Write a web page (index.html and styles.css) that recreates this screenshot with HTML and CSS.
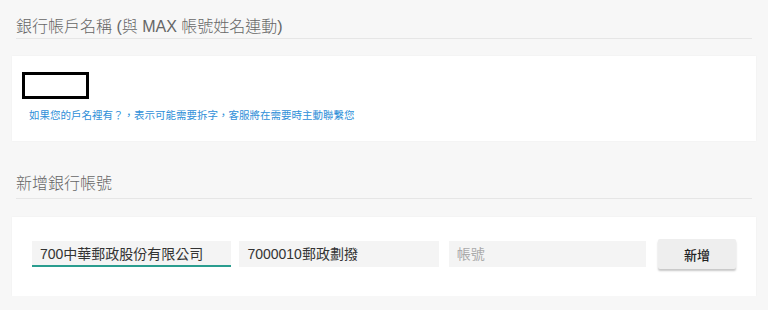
FILE: index.html
```html
<!DOCTYPE html>
<html lang="zh-TW">
<head>
    <meta charset="UTF-8">
    <title>銀行帳號</title>
    <link rel="stylesheet" href="styles.css">
</head>
<body>
    <div class="section-title">銀行帳戶名稱 (與 MAX 帳號姓名連動)</div>
    <div class="card card-name">
        <div class="name-box"></div>
        <div class="hint">如果您的戶名裡有？，表示可能需要拆字，客服將在需要時主動聯繫您</div>
    </div>

    <div class="section-title second">新增銀行帳號</div>
    <div class="card card-add">
        <div class="field active">700中華郵政股份有限公司</div>
        <div class="field">7000010郵政劃撥</div>
        <div class="field placeholder">帳號</div>
        <button class="add-btn">新增</button>
    </div>
</body>
</html>
```

FILE: styles.css
```css
body {
    margin: 0;
    padding: 0 12px;
    background: #f7f7f7;
    font-family: 'Liberation Sans', 'Noto Sans CJK TC', sans-serif;
}

.section-title {
    margin: 0 4px;
    padding: 16px 0 0;
    line-height: 22px;
    height: 22px;
    font-size: 16px;
    font-weight: 300;
    color: #666;
    border-bottom: 1px solid #e6e6e6;
}

.section-title.second {
    margin-top: 16px;
    padding-top: 16px;
    height: 25px;
}

.card {
    background: white;
    box-shadow: 0 0 2px rgba(0,0,0,0.04);
}

.card-name {
    margin-top: 17px;
    padding: 16px 10px 20px;
}

.name-box {
    width: 61px;
    height: 21px;
    border: 3px solid #000;
}

.hint {
    margin: 10px 0 0 7px;
    font-size: 10.5px;
    line-height: 12px;
    color: #2f8fd8;
}

.card-add {
    margin-top: 18px;
    padding: 21px 20px 26px;
    display: flex;
    align-items: center;
    height: 32px;
}

.field {
    width: 192px;
    height: 26px;
    line-height: 26px;
    padding: 0 0 0 8px;
    background: #f4f4f4;
    font-size: 14px;
    color: #333;
    margin-right: 8px;
}

.field.active {
    height: 24px;
    border-bottom: 2px solid #2a9d8f;
}

.field.placeholder {
    margin-left: 2px;
    width: 190px;
    color: #aaa;
    margin-right: 12px;
}

.add-btn {
    width: 78px;
    height: 30px;
    border: none;
    border-radius: 2px;
    background: #eeeeee;
    box-shadow: 0 2px 2px rgba(0,0,0,0.22);
    font-family: inherit;
    font-size: 13px;
    font-weight: 500;
    color: #222;
    cursor: pointer;
}
```
